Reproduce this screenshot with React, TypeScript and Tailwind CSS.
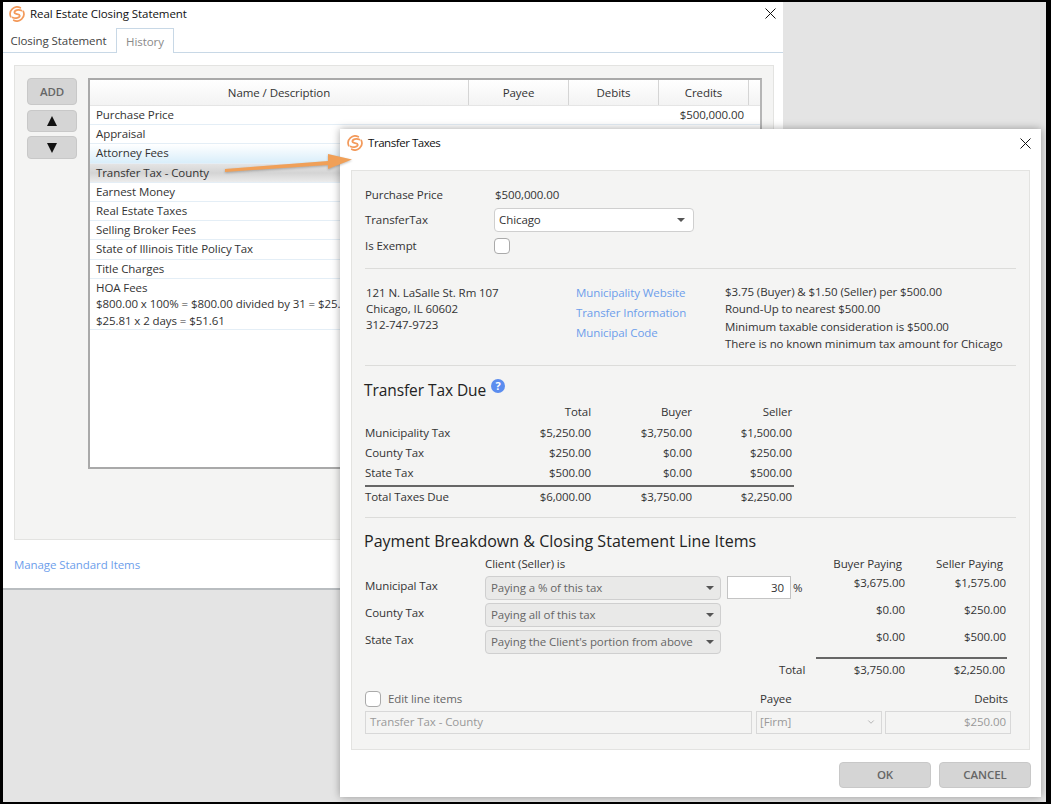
import { ChevronDown } from "lucide-react";
import type { ReactNode } from "react";

const rows = [
  "Purchase Price",
  "Appraisal",
  "Attorney Fees",
  "Transfer Tax - County",
  "Earnest Money",
  "Real Estate Taxes",
  "Selling Broker Fees",
  "State of Illinois Title Policy Tax",
  "Title Charges",
];

const dueRows = [
  ["Municipality Tax", "$5,250.00", "$3,750.00", "$1,500.00"],
  ["County Tax", "$250.00", "$0.00", "$250.00"],
  ["State Tax", "$500.00", "$0.00", "$500.00"],
];

const breakdown = [
  { label: "Municipal Tax", select: "Paying a % of this tax", buyer: "$3,675.00", seller: "$1,575.00" },
  { label: "County Tax", select: "Paying all of this tax", buyer: "$0.00", seller: "$250.00" },
  { label: "State Tax", select: "Paying the Client's portion from above", buyer: "$0.00", seller: "$500.00" },
];

function Logo() {
  return (
    <svg viewBox="0 0 16 16" className="h-[16px] w-[16px] shrink-0" fill="none" stroke="#f39a5b" strokeWidth="1.7" strokeLinecap="round">
      <path d="M11.3 1.8A6.9 6.9 0 0 0 1.7 10.6" />
      <path d="M4.7 14.2A6.9 6.9 0 0 0 14.3 5.4" />
      <path d="M12.4 4.5C9.5 3 5.3 4.1 5.4 6.5C5.5 8.7 10.5 7.4 10.7 9.6C10.9 11.9 6.4 13 3.6 11.5" strokeWidth="1.8" />
    </svg>
  );
}

function CloseIcon() {
  return (
    <svg viewBox="0 0 11 11" className="h-[11px] w-[11px]" stroke="#111" strokeWidth="1">
      <path d="M0.5 0.5L10.5 10.5M10.5 0.5L0.5 10.5" />
    </svg>
  );
}

function Caret() {
  return <div className="h-0 w-0 border-x-[4px] border-t-[4px] border-x-transparent border-t-[#555]" />;
}

function Divider({ className = "" }: { className?: string }) {
  return <div className={`h-px bg-[#dcdcda] ${className}`} />;
}

function Link({ children }: { children: ReactNode }) {
  return <div className="text-[#6d9eeb]">{children}</div>;
}

function BackWindow() {
  return (
    <div className="absolute left-[3px] top-[2px] h-[588px] w-[780px] border-b-2 border-[#b9bdc0] bg-white">
      <div className="flex h-[26px] items-center pb-[3px] pl-[6px] pr-[7px] text-[#111]">
        <Logo />
        <span className="ml-[5px] flex-1">Real Estate Closing Statement</span>
        <CloseIcon />
      </div>
      <div className="flex h-[25px] border-b border-[#c8d8e6]">
        <div className="flex w-[113px] items-center justify-center pr-[2px] pt-[2px] text-[#444]">Closing Statement</div>
        <div className="-mb-px flex w-[58px] items-center justify-center border-x border-t border-[#c8d8e6] bg-white pt-[2px] text-[#8a8a8a]">History</div>
      </div>
      <div className="ml-[11px] mr-[9px] mt-[12px] flex h-[475px] gap-[11px] border border-[#e3e3e1] bg-[#f4f4f3] py-[12px] pl-[12px]">
        <div className="flex w-[50px] flex-col">
          <div className="flex h-[27px] items-center justify-center rounded-sm border border-[#c8c8c8] bg-[#d5d5d5] font-semibold text-[#666]">ADD</div>
          <div className="mt-[5px] flex h-[22px] items-center justify-center rounded-sm border border-[#c8c8c8] bg-[#d5d5d5]">
            <div className="h-0 w-0 border-x-[5.5px] border-b-[10px] border-x-transparent border-b-[#111]" />
          </div>
          <div className="mt-[4px] flex h-[23px] items-center justify-center rounded-sm border border-[#c8c8c8] bg-[#d5d5d5]">
            <div className="h-0 w-0 border-x-[5.5px] border-t-[10px] border-x-transparent border-t-[#111]" />
          </div>
        </div>
        <div className="flex h-[391px] w-[674px] flex-col border-2 border-[#a9a9a9] border-r-[#b5b5b5] bg-white">
          <div className="flex h-[26px] shrink-0 border-b border-[#e5e5e5] bg-gradient-to-b from-white to-[#f3f3f3] text-[#333]">
            <div className="flex w-[379px] items-center justify-center border-r border-[#d5d5d5]">Name / Description</div>
            <div className="flex w-[100px] items-center justify-center border-r border-[#d5d5d5]">Payee</div>
            <div className="flex w-[90px] items-center justify-center border-r border-[#d5d5d5]">Debits</div>
            <div className="flex w-[90px] items-center justify-center border-r border-[#d5d5d5]">Credits</div>
          </div>
          {rows.map((r, i) => (
            <div
              key={r}
              className={`flex h-[19.2px] shrink-0 items-center justify-between border-b border-[#e4eef6] pl-[6px] pr-[16px] text-[#333] ${
                i === 2 ? "bg-gradient-to-b from-white to-[#d9eefa]" : i === 3 ? "bg-gradient-to-b from-[#e4e4e4] via-[#d4d4d4] to-[#ececec]" : ""
              }`}
            >
              <span>{r}</span>
              {i === 0 && <span>$500,000.00</span>}
            </div>
          ))}
          <div className="border-b border-[#e4eef6] pl-[6px] pt-[1px] leading-[16.5px] text-[#333]">
            <div>HOA Fees</div>
            <div>$800.00 x 100% = $800.00 divided by 31 = $25.81</div>
            <div>$25.81 x 2 days = $51.61</div>
          </div>
        </div>
      </div>
      <div className="ml-[11px] mt-[16px] text-[#6d9eeb]">Manage Standard Items</div>
    </div>
  );
}

function Arrow() {
  return (
    <svg className="absolute left-[222px] top-[150px] drop-shadow-[0_1px_1px_rgba(0,0,0,0.25)]" width="132" height="26" viewBox="0 0 132 26">
      <path d="M3 19L106 11V4L130 9.5L106 19V15L3 22Z" fill="#f0a058" />
    </svg>
  );
}

function TransferDialog() {
  return (
    <div className="absolute left-[340px] top-[129px] flex h-[668px] w-[701px] flex-col bg-white shadow-[0_0_8px_rgba(0,0,0,0.35)]">
      <div className="flex h-[27px] items-center pl-[7px] pr-[10px] pt-px text-[#111]">
        <Logo />
        <span className="ml-[5px] flex-1 tracking-[-0.45px]">Transfer Taxes</span>
        <CloseIcon />
      </div>
      <div className="mx-[11px] mt-[14px] flex h-[580px] flex-col border border-[#e3e3e1] bg-[#f4f4f3] text-[#333]">
        <div className="ml-[13px] mt-[13px] flex h-[21px] items-center">
          <span className="w-[130px]">Purchase Price</span>
          <span>$500,000.00</span>
        </div>
        <div className="ml-[13px] mt-[2px] flex h-[25px] items-center">
          <span className="w-[129px]">TransferTax</span>
          <div className="flex h-[24px] w-[200px] items-center justify-between rounded-sm border border-[#cfcfcf] bg-white pl-[4px] pr-[8px]">
            <span>Chicago</span>
            <Caret />
          </div>
        </div>
        <div className="ml-[13px] mt-[1px] flex h-[25px] items-center">
          <span className="w-[129px]">Is Exempt</span>
          <div className="h-[16px] w-[16px] rounded-sm border border-[#aaa] bg-white" />
        </div>
        <Divider className="mx-[13px] mt-[10px]" />
        <div className="ml-[14px] mt-[15px] flex leading-[16.3px]">
          <div className="w-[210px] pt-px leading-[16px]">
            <div>121 N. LaSalle St. Rm 107</div>
            <div>Chicago, IL 60602</div>
            <div>312-747-9723</div>
          </div>
          <div className="flex w-[149px] flex-col gap-[3.7px] pt-px">
            <Link>Municipality Website</Link>
            <Link>Transfer Information</Link>
            <Link>Municipal Code</Link>
          </div>
          <div className="flex flex-col gap-[1.2px]">
            <div>$3.75 (Buyer) &amp; $1.50 (Seller) per $500.00</div>
            <div>Round-Up to nearest $500.00</div>
            <div>Minimum taxable consideration is $500.00</div>
            <div>There is no known minimum tax amount for Chicago</div>
          </div>
        </div>
        <Divider className="mx-[13px] mt-[12px]" />
        <div className="ml-[12px] mt-[12px] flex items-start text-[15.5px] leading-[24px] text-[#222]">
          Transfer Tax Due
          <span className="ml-[5px] mt-[1px] flex h-[14px] w-[14px] items-center justify-center rounded-full bg-[#5b8def] text-[11px] font-bold leading-none text-white">?</span>
        </div>
        <div className="ml-[13px] w-[429px]">
          <div className="flex h-[21px] items-center justify-end pr-[2px]">
            <span className="w-[100px] text-right">Total</span>
            <span className="w-[101px] text-right">Buyer</span>
            <span className="w-[100px] text-right">Seller</span>
          </div>
          {dueRows.map((r) => (
            <div key={r[0]} className="flex h-[20px] items-center pr-[2px]">
              <span className="flex-1">{r[0]}</span>
              <span className="w-[100px] text-right">{r[1]}</span>
              <span className="w-[101px] text-right">{r[2]}</span>
              <span className="w-[100px] text-right">{r[3]}</span>
            </div>
          ))}
          <div className="mt-[2px] flex h-[23px] items-center border-t-2 border-[#666] pr-[2px]">
            <span className="flex-1">Total Taxes Due</span>
            <span className="w-[100px] text-right">$6,000.00</span>
            <span className="w-[101px] text-right">$3,750.00</span>
            <span className="w-[100px] text-right">$2,250.00</span>
          </div>
        </div>
        <Divider className="mx-[13px] mt-[9px]" />
        <div className="ml-[12px] mt-[11px] text-[16px] leading-[24px] tracking-[0.02px] text-[#222]">Payment Breakdown &amp; Closing Statement Line Items</div>
        <div className="ml-[13px] mt-[2px] flex h-[18px] items-center">
          <span className="ml-[120px] w-[300px]">Client (Seller) is</span>
          <span className="w-[117px] text-right">Buyer Paying</span>
          <span className="w-[101px] text-right">Seller Paying</span>
        </div>
        <div className="ml-[13px] mt-[3px] flex flex-col gap-[3px]">
          {breakdown.map((b, i) => (
            <div key={b.label} className="flex h-[24px] items-center">
              <span className="w-[120px] -translate-y-[2px]">{b.label}</span>
              <div className="flex h-[24px] w-[236px] items-center justify-between rounded-sm border border-[#cfcfcf] bg-[#e9e9e8] pl-[5px] pr-[6px] text-[#666]">
                <span>{b.select}</span>
                <Caret />
              </div>
              <div className="flex w-[82px] items-center">
                {i === 0 && (
                  <>
                    <div className="ml-[6px] flex h-[23px] w-[64px] items-center justify-end border border-[#c4c4c4] bg-white pr-[6px]">30</div>
                    <span className="ml-[2px]">%</span>
                  </>
                )}
              </div>
              <span className="w-[102px] -translate-y-[5px] text-right">{b.buyer}</span>
              <span className="w-[101px] -translate-y-[5px] text-right">{b.seller}</span>
            </div>
          ))}
        </div>
        <div className="ml-[13px] mt-[3px] flex h-[27px] items-start">
          <span className="ml-[414px] mt-[4px] w-[24px] text-right">Total</span>
          <div className="ml-[13px] flex w-[191px] border-t-2 border-[#666] pt-[2px]">
            <span className="w-[89px] text-right">$3,750.00</span>
            <span className="w-[100px] text-right">$2,250.00</span>
          </div>
        </div>
        <div className="ml-[13px] mt-[5px] flex h-[20px] w-[643px] items-center">
          <div className="h-[16px] w-[16px] rounded-sm border border-[#aaa] bg-white" />
          <span className="ml-[7px] w-[372px] text-[#666]">Edit line items</span>
          <span className="flex-1">Payee</span>
          <span>Debits</span>
        </div>
        <div className="ml-[13px] mt-[2px] flex text-[#999]">
          <div className="flex h-[23px] w-[387px] items-center border border-[#d8d8d8] pl-[4px]">Transfer Tax - County</div>
          <div className="ml-[4px] flex h-[23px] w-[126px] items-center justify-between border border-[#d8d8d8] pl-[3px] pr-[5px]">
            [Firm]
            <ChevronDown size={10} className="text-[#aaa]" />
          </div>
          <div className="ml-[3px] flex h-[23px] w-[126px] items-center justify-end border border-[#d8d8d8] pr-[4px]">$250.00</div>
        </div>
      </div>
      <div className="mr-[10px] mt-[12px] flex justify-end gap-[8px]">
        <div className="flex h-[26px] w-[92px] items-center justify-center rounded-sm border border-[#c8c8c8] bg-[#d5d5d5] font-semibold text-[#666]">OK</div>
        <div className="flex h-[26px] w-[92px] items-center justify-center rounded-sm border border-[#c8c8c8] bg-[#d5d5d5] font-semibold text-[#666]">CANCEL</div>
      </div>
    </div>
  );
}

export default function App() {
  return (
    <div className="relative h-[804px] w-[1051px] overflow-hidden bg-black font-['Open_Sans',sans-serif] text-[11.5px] leading-[18px] tracking-[-0.08px]">
      <div className="absolute left-[3px] top-[2px] h-[800px] w-[1043px] bg-[#e4e4e4]" />
      <BackWindow />
      <TransferDialog />
      <Arrow />
    </div>
  );
}
